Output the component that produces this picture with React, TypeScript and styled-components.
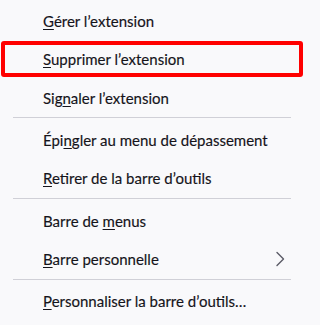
import React from "react";
import styled, { createGlobalStyle } from "styled-components";

const Global = createGlobalStyle`
  html, body {
    margin: 0;
    background: #f9f9fb;
  }
  body {
    font-family: Lato, "Segoe UI", "Liberation Sans", sans-serif;
    font-size: 15px;
    color: #15141a;
  }
`;

const Menu = styled.div`
  width: 305px;
  height: 325px;
  box-sizing: border-box;
  padding-top: 1.6px;
  background: #f9f9fb;
  display: flex;
  flex-direction: column;
`;

const Item = styled.div<{ $highlighted?: boolean }>`
  position: relative;
  height: 38.4px;
  flex: none;
  display: flex;
  align-items: center;
  padding-left: 43px;
  padding-right: 17px;
  white-space: nowrap;

  ${(p) =>
    p.$highlighted &&
    `
    &::after {
      content: "";
      position: absolute;
      top: 1px;
      left: 1px;
      right: 2px;
      bottom: 1.4px;
      border: 4px solid #ff0000;
      border-radius: 3px;
    }
  `}
`;

const Label = styled.span`
  flex: 1;
  line-height: 20px;
  -webkit-text-stroke: 0.15px #15141a;
`;

const Key = styled.u`
  text-decoration-thickness: 1px;
  text-underline-offset: 2px;
`;

const Separator = styled.div`
  flex: none;
  height: 1px;
  margin: 0.4px 14px 2.6px 13px;
  background: #d0d0d7;
`;

const Chevron = () => (
  <svg width="16" height="16" viewBox="0 0 16 16" fill="none">
    <path
      d="M5 1.5 L11.5 8 L5 14.5"
      stroke="#5b5b66"
      strokeWidth="1.4"
      strokeLinecap="round"
      strokeLinejoin="round"
    />
  </svg>
);

export default function App() {
  return (
    <>
      <Global />
      <Menu>
        <Item>
          <Label>
            <Key>G</Key>érer l’extension
          </Label>
        </Item>
        <Item $highlighted>
          <Label>
            <Key>S</Key>upprimer l’extension
          </Label>
        </Item>
        <Item>
          <Label>
            Sig<Key>n</Key>aler l’extension
          </Label>
        </Item>
        <Separator />
        <Item>
          <Label>
            Épi<Key>n</Key>gler au menu de dépassement
          </Label>
        </Item>
        <Item>
          <Label>
            <Key>R</Key>etirer de la barre d’outils
          </Label>
        </Item>
        <Separator />
        <Item>
          <Label>
            Barre de <Key>m</Key>enus
          </Label>
        </Item>
        <Item>
          <Label>
            <Key>B</Key>arre personnelle
          </Label>
          <Chevron />
        </Item>
        <Separator />
        <Item>
          <Label>
            <Key>P</Key>ersonnaliser la barre d’outils…
          </Label>
        </Item>
      </Menu>
    </>
  );
}
